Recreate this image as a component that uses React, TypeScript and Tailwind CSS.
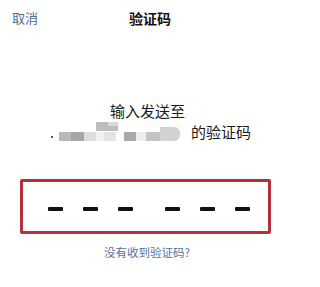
import React from "react";

const font = { fontFamily: '"Noto Sans CJK SC", "Noto Sans", sans-serif' };

const Dash = () => <div className="w-[15px] h-[4px] bg-[#111] rounded-[1px]" />;

// pixelated blur block standing in for the hidden phone number
const Blur = () => (
    <div className="relative flex items-end h-[20px] w-[138px] mr-[2px]">
        <div className="w-[2px] h-[2px] bg-[#555] mb-[4px] mr-[6px]" />
        <div className="w-[12px] h-[9px] bg-[#b9b9b9] mb-[1px]" />
        <div className="w-[13px] h-[9px] bg-[#a6a6a6] mb-[1px]" />
        <div className="w-[12px] h-[9px] bg-[#dcdcdc] mb-[1px]" />
        <div className="w-[8px] h-[9px] bg-[#f1f1f1] mb-[1px]" />
        <div className="w-[12px] h-[9px] bg-[#e4e4e4] mb-[1px]" />
        <div className="w-[8px] h-[9px] bg-white mb-[1px]" />
        <div className="w-[12px] h-[9px] bg-[#a9a9a9] mb-[1px]" />
        <div className="w-[10px] h-[9px] bg-[#ececec] mb-[1px]" />
        <div className="w-[14px] h-[9px] bg-[#c4c4c4] mb-[1px]" />
        <div className="w-[20px] h-[14px] bg-[#d2d2d2] mb-[1px] rounded-r-[6px]" />
        <div className="absolute left-[45px] top-[0px] w-[22px] h-[9px] bg-[#bdbdbd]" />
        <div className="absolute left-[57px] top-[0px] w-[10px] h-[4px] bg-[#d8d8d8]" />
    </div>
);

export default function App() {
    return (
        <div className="w-[300px] h-[287px] bg-white overflow-hidden" style={font}>
            {/* header */}
            <div className="relative h-[36px] flex items-center justify-center">
                <span className="absolute left-[12px] text-[13px] text-[#4b6c95]">取消</span>
                <span className="text-[14px] font-bold text-[#111]">验证码</span>
            </div>

            {/* hint */}
            <div className="mt-[64px] flex flex-col items-center text-[15px] leading-[21px] text-[#1a1a1a]">
                <div className="-ml-[5px]">输入发送至</div>
                <div className="flex items-center ml-[2px]">
                    <Blur />
                    <span>的验证码</span>
                </div>
            </div>

            {/* code box */}
            <div className="mt-[37px] ml-[20px] w-[251px] h-[55px] border-[3px] border-[#b4313d] rounded-[2px] flex items-center pl-[25px] pt-[4px]">
                <div className="flex gap-[20px]">
                    <Dash />
                    <Dash />
                    <Dash />
                </div>
                <div className="flex gap-[20px] ml-[32px]">
                    <Dash />
                    <Dash />
                    <Dash />
                </div>
            </div>

            <div className="mt-[10px] flex justify-center -ml-[6px]">
                <span className="text-[11.5px] text-[#5274a0]">没有收到验证码?</span>
            </div>
        </div>
    );
}
